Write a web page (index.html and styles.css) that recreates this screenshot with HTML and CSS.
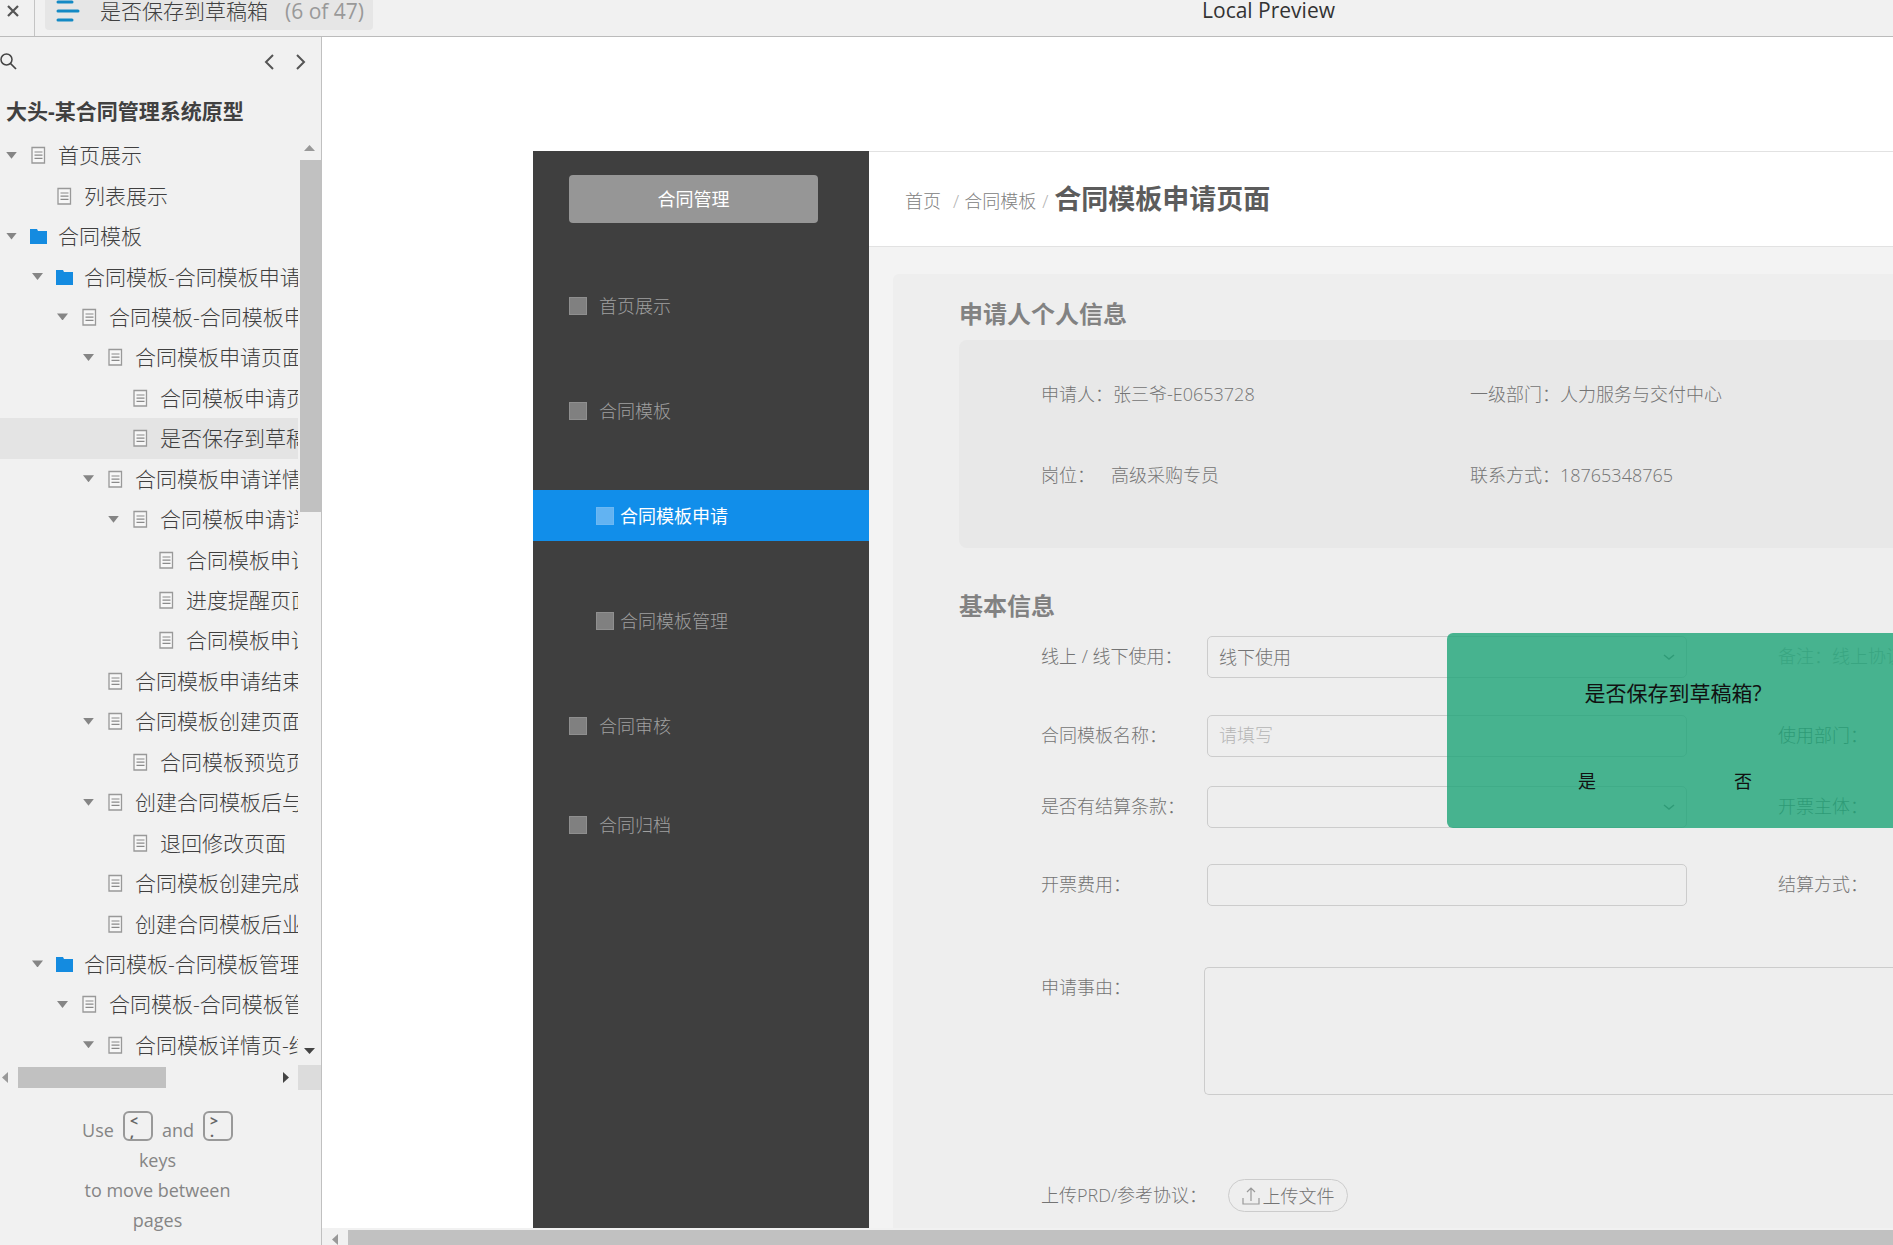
FILE: index.html
```html
<!DOCTYPE html>
<html lang="zh-CN">
<head>
<meta charset="utf-8">
<title>是否保存到草稿箱</title>
<link rel="stylesheet" href="styles.css">
</head>
<body>
<svg class="defs" aria-hidden="true">
  <symbol id="file" viewBox="0 0 18 18"><path d="M2 1.5h12.5v15.5H2z" fill="#f7f7f7" stroke="#999" stroke-width="1.3"/><path d="M4.5 6h8M4.5 9.200h8M4.5 12.400h8" stroke="#8a8a8a" stroke-width="1.200"/></symbol>
  <symbol id="folder" viewBox="0 0 18 18"><path d="M0 2h7l1 2h9v13H0z" fill="#148be0"/></symbol>
  <symbol id="chevron" viewBox="0 0 12 8"><path d="M1 2l5 4 5-4" fill="none" stroke="#777" stroke-width="1.500"/></symbol>
</svg>

<header class="topbar">
  <button class="close" aria-label="关闭"><svg width="14" height="14" viewBox="0 0 14 14"><path d="M2 2l10 10M12 2L2 12" stroke="#555" stroke-width="2.200"/></svg></button>
  <button class="page-pill">
    <svg width="24" height="22" viewBox="0 0 24 22"><path d="M2 2h14M2 11h20M2 20h14" stroke="#1389c4" stroke-width="3" stroke-linecap="round"/></svg>
    <span class="page-name">是否保存到草稿箱</span><span class="page-count">(6 of 47)</span>
  </button>
  <div class="preview-title">Local Preview</div>
</header>

<div class="workspace">
  <aside class="sitemap">
    <div class="tools">
      <button aria-label="搜索"><svg width="17" height="17" viewBox="0 0 17 17"><circle cx="6.500" cy="6.500" r="5.500" fill="none" stroke="#444" stroke-width="1.500"/><path d="M10.500 10.500l5.500 5.500" stroke="#444" stroke-width="1.700"/></svg></button>
      <span class="spacer"></span>
      <button aria-label="上一页"><svg width="12" height="16" viewBox="0 0 12 16"><path d="M10 1L3 8l7 7" fill="none" stroke="#555" stroke-width="2"/></svg></button>
      <button aria-label="下一页"><svg width="12" height="16" viewBox="0 0 12 16"><path d="M2 1l7 7-7 7" fill="none" stroke="#555" stroke-width="2"/></svg></button>
    </div>
    <h1 class="project">大头-某合同管理系统原型</h1>
    <div class="tree-area">
      <ul class="tree">
        <li class="row l0"><i class="caret"></i><svg class="ico"><use href="#file"/></svg><a href="#">首页展示</a></li>
        <li class="row l1"><i class="caret none"></i><svg class="ico"><use href="#file"/></svg><a href="#">列表展示</a></li>
        <li class="row l0"><i class="caret"></i><svg class="ico"><use href="#folder"/></svg><a href="#">合同模板</a></li>
        <li class="row l1"><i class="caret"></i><svg class="ico"><use href="#folder"/></svg><a href="#">合同模板-合同模板申请</a></li>
        <li class="row l2"><i class="caret"></i><svg class="ico"><use href="#file"/></svg><a href="#">合同模板-合同模板申</a></li>
        <li class="row l3"><i class="caret"></i><svg class="ico"><use href="#file"/></svg><a href="#">合同模板申请页面</a></li>
        <li class="row l4"><i class="caret none"></i><svg class="ico"><use href="#file"/></svg><a href="#">合同模板申请页</a></li>
        <li class="row l4 current"><i class="caret none"></i><svg class="ico"><use href="#file"/></svg><a href="#">是否保存到草稿</a></li>
        <li class="row l3"><i class="caret"></i><svg class="ico"><use href="#file"/></svg><a href="#">合同模板申请详情</a></li>
        <li class="row l4"><i class="caret"></i><svg class="ico"><use href="#file"/></svg><a href="#">合同模板申请详</a></li>
        <li class="row l5"><i class="caret none"></i><svg class="ico"><use href="#file"/></svg><a href="#">合同模板申请</a></li>
        <li class="row l5"><i class="caret none"></i><svg class="ico"><use href="#file"/></svg><a href="#">进度提醒页面</a></li>
        <li class="row l5"><i class="caret none"></i><svg class="ico"><use href="#file"/></svg><a href="#">合同模板申请</a></li>
        <li class="row l3"><i class="caret none"></i><svg class="ico"><use href="#file"/></svg><a href="#">合同模板申请结束</a></li>
        <li class="row l3"><i class="caret"></i><svg class="ico"><use href="#file"/></svg><a href="#">合同模板创建页面</a></li>
        <li class="row l4"><i class="caret none"></i><svg class="ico"><use href="#file"/></svg><a href="#">合同模板预览页</a></li>
        <li class="row l3"><i class="caret"></i><svg class="ico"><use href="#file"/></svg><a href="#">创建合同模板后与</a></li>
        <li class="row l4"><i class="caret none"></i><svg class="ico"><use href="#file"/></svg><a href="#">退回修改页面</a></li>
        <li class="row l3"><i class="caret none"></i><svg class="ico"><use href="#file"/></svg><a href="#">合同模板创建完成</a></li>
        <li class="row l3"><i class="caret none"></i><svg class="ico"><use href="#file"/></svg><a href="#">创建合同模板后业</a></li>
        <li class="row l1"><i class="caret"></i><svg class="ico"><use href="#folder"/></svg><a href="#">合同模板-合同模板管理</a></li>
        <li class="row l2"><i class="caret"></i><svg class="ico"><use href="#file"/></svg><a href="#">合同模板-合同模板管</a></li>
        <li class="row l3"><i class="caret"></i><svg class="ico"><use href="#file"/></svg><a href="#">合同模板详情页-结</a></li>
      </ul>
      <div class="vbar"><i class="tri up"></i><div class="vtrack"><div class="vthumb"></div></div><i class="tri down"></i></div>
    </div>
    <div class="hrow">
      <div class="hbar"><i class="tri left"></i><div class="htrack"><div class="hthumb"></div></div><i class="tri right"></i></div>
      <div class="corner"></div>
    </div>
    <div class="hint">
      <div class="keys">Use <kbd>&lt;<br>,</kbd> and <kbd>&gt;<br>.</kbd></div>
      <div>keys</div>
      <div>to move between</div>
      <div>pages</div>
    </div>
  </aside>

  <main class="stage">
    <div class="canvas">
      <nav class="menu">
        <button class="menu-title">合同管理</button>
        <a class="item" href="#"><i class="sq"></i>首页展示</a>
        <a class="item" href="#"><i class="sq"></i>合同模板</a>
        <a class="item sub active" href="#"><i class="sq"></i>合同模板申请</a>
        <a class="item sub" href="#"><i class="sq"></i>合同模板管理</a>
        <a class="item" href="#"><i class="sq"></i>合同审核</a>
        <a class="item last" href="#"><i class="sq"></i>合同归档</a>
      </nav>
      <div class="page">
        <div class="crumbs">
          <a href="#">首页</a><span class="slash first">/</span><a href="#">合同模板</a><span class="slash">/</span>
          <h2>合同模板申请页面</h2>
        </div>
        <div class="card">
          <h3>申请人个人信息</h3>
          <div class="info">
            <div>申请人：张三爷-E0653728</div><div>一级部门：人力服务与交付中心</div>
            <div class="post"><span>岗位：</span><span>高级采购专员</span></div><div>联系方式：18765348765</div>
          </div>
          <h3>基本信息</h3>
          <form class="form">
            <label for="usage">线上 / 线下使用：</label>
            <div class="select"><select id="usage"><option>线下使用</option></select><svg><use href="#chevron"/></svg></div>
            <span class="note">备注：线上协议</span>

            <label for="name">合同模板名称：</label>
            <input id="name" type="text" placeholder="请填写">
            <span class="side">使用部门：</span>

            <label for="terms">是否有结算条款：</label>
            <div class="select"><select id="terms"><option></option></select><svg><use href="#chevron"/></svg></div>
            <span class="side">开票主体：</span>

            <label for="fee">开票费用：</label>
            <input id="fee" type="text">
            <span class="side">结算方式：</span>

            <label for="reason">申请事由：</label>
            <textarea id="reason"></textarea>

            <label for="upload">上传PRD/参考协议：</label>
            <button class="upload" id="upload" type="button"><svg width="18" height="20" viewBox="0 0 18 20"><path d="M1 12v6h16v-6M9 15V2M5 6l4-4 4 4" fill="none" stroke="#999" stroke-width="1.200"/></svg>上传文件</button>

            <div class="dialog" role="dialog" aria-label="是否保存到草稿箱">
              <p>是否保存到草稿箱?</p>
              <div class="answers"><button type="button">是</button><button type="button">否</button></div>
            </div>
          </form>
        </div>
      </div>
    </div>
    <div class="stage-bar"><i class="tri left"></i><div class="stage-thumb"></div></div>
  </main>
</div>
</body>
</html>
```
FILE: styles.css
```css
* { box-sizing: border-box; }
body {
  margin: 0;
  height: 100vh;
  display: flex;
  flex-direction: column;
  overflow: hidden;
  background: #fff;
  color: #404040;
  font: 300 18px/24px "Open Sans", "Noto Sans CJK SC", sans-serif;
}
h1, h2, h3, p, ul { margin: 0; padding: 0; }
ul { list-style: none; }
a { color: inherit; text-decoration: none; }
button, input, select, textarea { font: inherit; color: inherit; background: none; border: 0; padding: 0; margin: 0; }
svg { flex: none; display: block; }
.defs { position: absolute; width: 0; height: 0; }

/* top bar */
.topbar { flex: none; display: flex; height: 37px; background: #f1f1f1; border-bottom: 1px solid #bbb; }
.close { width: 35px; padding: 3px 0 0 6px; border-right: 1px solid #c4c4c4; }
.close svg { margin-bottom: 18px; }
.page-pill { display: flex; align-items: center; height: 30px; margin-left: 10px; padding: 0 9px 8px 11px; background: #e6e6e6; border-radius: 0 0 4px 4px; font-size: 21px; }
.page-name { margin: 0 17px 0 20px; }
.page-count { color: #999; font-weight: 400; }
.preview-title { margin-left: 829px; line-height: 20px; font-size: 21px; font-weight: 400; color: #333; white-space: nowrap; }

.workspace { flex: 1; display: flex; min-height: 0; }

/* page tree */
.sitemap { flex: none; width: 322px; display: flex; flex-direction: column; background: #f1f1f1; border-right: 1px solid #c0c0c0; }
.tools { display: flex; align-items: center; gap: 20px; height: 49px; padding-right: 14px; }
.spacer { flex: 1; }
.project { height: 49px; padding: 11px 0 0 6px; font-size: 21px; line-height: 28px; font-weight: 700; white-space: nowrap; }
.tree-area { flex: 1; display: flex; min-height: 0; }
.tree { flex: 1; min-width: 0; display: flex; flex-direction: column; overflow: hidden; }
.row { flex: 1; display: flex; align-items: center; min-height: 0; font-size: 21px; line-height: 28px; white-space: nowrap; }
.row .caret { flex: none; width: 11px; height: 7px; margin-right: 13px; background: #858585; clip-path: polygon(0 0, 100% 0, 50% 100%); }
.row .caret.none { visibility: hidden; }
.row .ico { width: 18px; height: 18px; margin-right: 10px; }
.l0 { padding-left: 6px; }
.l1 { padding-left: 32px; }
.l2 { padding-left: 57px; }
.l3 { padding-left: 83px; }
.l4 { padding-left: 108px; }
.l5 { padding-left: 134px; }
.current { background: #e4e4e4; }

/* scroll bars */
.tri { flex: none; background: #999; }
.tri.up { width: 11px; height: 6px; margin: 10px 0 9px; clip-path: polygon(50% 0, 100% 100%, 0 100%); }
.tri.down { width: 11px; height: 6px; margin: 8px 0 11px; background: #444; clip-path: polygon(0 0, 100% 0, 50% 100%); }
.tri.left { width: 6px; height: 11px; clip-path: polygon(100% 0, 100% 100%, 0 50%); }
.tri.right { width: 6px; height: 11px; background: #444; clip-path: polygon(0 0, 100% 50%, 0 100%); }
.vbar { flex: none; width: 23px; display: flex; flex-direction: column; align-items: center; }
.vtrack { flex: 1; align-self: stretch; padding-left: 2px; }
.vthumb { height: 40%; background: #c1c1c1; }
.hrow { flex: none; display: flex; height: 25px; }
.hbar { flex: 1; display: flex; align-items: center; padding: 0 9px 0 2px; }
.htrack { flex: 1; margin: 0 0 0 10px; }
.hthumb { width: 56%; height: 21px; background: #c1c1c1; }
.corner { width: 23px; background: #dcdcdc; }

.hint { flex: none; height: 155px; padding: 21px 6px 0 0; text-align: center; line-height: 30px; font-size: 18px; font-weight: 400; color: #858585; }
.keys { display: flex; justify-content: center; gap: 9px; height: 34px; line-height: 38px; }
kbd { width: 30px; height: 30px; padding: 2px 0 0 5px; border: 2px solid #999; border-radius: 6px; text-align: left; font: 700 14px/11px "Open Sans", sans-serif; color: #666; }

/* prototype stage */
.stage { flex: 1; min-width: 0; display: flex; flex-direction: column; }
.canvas { flex: 1; min-height: 0; display: flex; padding: 114px 0 0 211px; overflow: hidden; }
.menu { flex: none; width: 336px; padding-top: 24px; background: #3f3f3f; color: #a0a0a0; }
.menu-title { display: block; width: 249px; height: 48px; margin: 0 0 57px 36px; background: #969696; border-radius: 4px; color: #fff; font-weight: 400; }
.item { display: flex; align-items: center; gap: 12px; height: 51px; margin-bottom: 54px; padding-left: 36px; }
.item.sub { gap: 6px; padding-left: 63px; }
.item.last { height: 39px; }
.item.active { background: #118eea; color: #fff; font-weight: 400; }
.sq { width: 18px; height: 18px; background: #808080; border: 1px solid #8f8f8f; }
.active .sq { background: #62b3f2; border-color: #6cb8f3; }

.page { flex: 1; min-width: 0; background: #f3f3f3; overflow: hidden; }
.crumbs { display: flex; align-items: center; height: 96px; padding-left: 36px; background: #fff; border: solid #e2e2e2; border-width: 1px 0; color: #808080; white-space: nowrap; }
.crumbs a, .slash { padding-top: 3px; }
.slash { margin: 0 6px; color: #b0b0b0; }
.slash.first { margin: 0 5px 0 12px; }
.crumbs h2 { font-size: 27px; line-height: 36px; font-weight: 700; color: #5c5c5c; }
.card { min-height: 100%; margin: 27px 0 0 24px; padding: 22px 0 0 66px; background: #eee; border-radius: 6px 0 0 0; color: #747474; }
.card h3 { font-size: 24px; line-height: 36px; font-weight: 700; color: #828282; }
.info { display: grid; grid-template-columns: 429px 1fr; align-content: start; row-gap: 57px; height: 208px; margin: 8px 0 40px; padding: 42px 0 0 82px; background: #e8e8e8; border-radius: 8px 0 0 8px; white-space: nowrap; }
.post { display: flex; gap: 16px; }

.form {
  position: relative;
  display: grid;
  grid-template-columns: 163px 3px 480px 1fr;
  grid-template-rows: 79px 71px 78px 103px 212px 60px;
  align-items: start;
  margin: 12px 0 0 82px;
  line-height: 40px;
  white-space: nowrap;
}
.form label { grid-column: 1; }
.form input, .select, .upload { grid-column: 3; }
.note, .side { padding-left: 91px; }
.note { color: #aaa; }
.form input, .form select, .select { width: 100%; height: 42px; }
.form input, .form select, .form textarea { border: 1px solid #ccc; border-radius: 5px; padding: 0 11px 2px; }
.form input::placeholder { color: #b5b5b5; opacity: 1; }
.select { display: grid; align-items: center; }
.select select { grid-area: 1 / 1; appearance: none; }
.select svg { grid-area: 1 / 1; justify-self: end; width: 12px; height: 8px; margin-right: 12px; pointer-events: none; }
.form textarea { grid-column: 2 / 5; width: 100%; height: 128px; border-right: 0; border-radius: 5px 0 0 5px; resize: none; }
.upload { display: flex; align-items: center; justify-content: center; gap: 3px; width: 120px; height: 33px; margin: 0 0 0 21px; border: 1px solid #ccc; border-radius: 17px; line-height: 24px; }
.form label[for="upload"] { line-height: 33px; }

.dialog { position: absolute; top: -3px; left: 406px; width: 452px; height: 195px; padding-top: 44px; border-radius: 6px; background: rgba(29, 164, 119, .8); color: #111; font-weight: 400; text-align: center; line-height: 32px; }
.dialog p { font-size: 21px; }
.answers { display: flex; justify-content: center; gap: 138px; padding: 57px 16px 0 0; line-height: 30px; }

.stage-bar { flex: none; display: flex; align-items: flex-end; height: 17px; padding-left: 10px; background: #f1f1f1; }
.stage-bar .tri { margin: 0 10px 0 0; }
.stage-thumb { flex: 1; height: 15px; background: #c1c1c1; }
```
